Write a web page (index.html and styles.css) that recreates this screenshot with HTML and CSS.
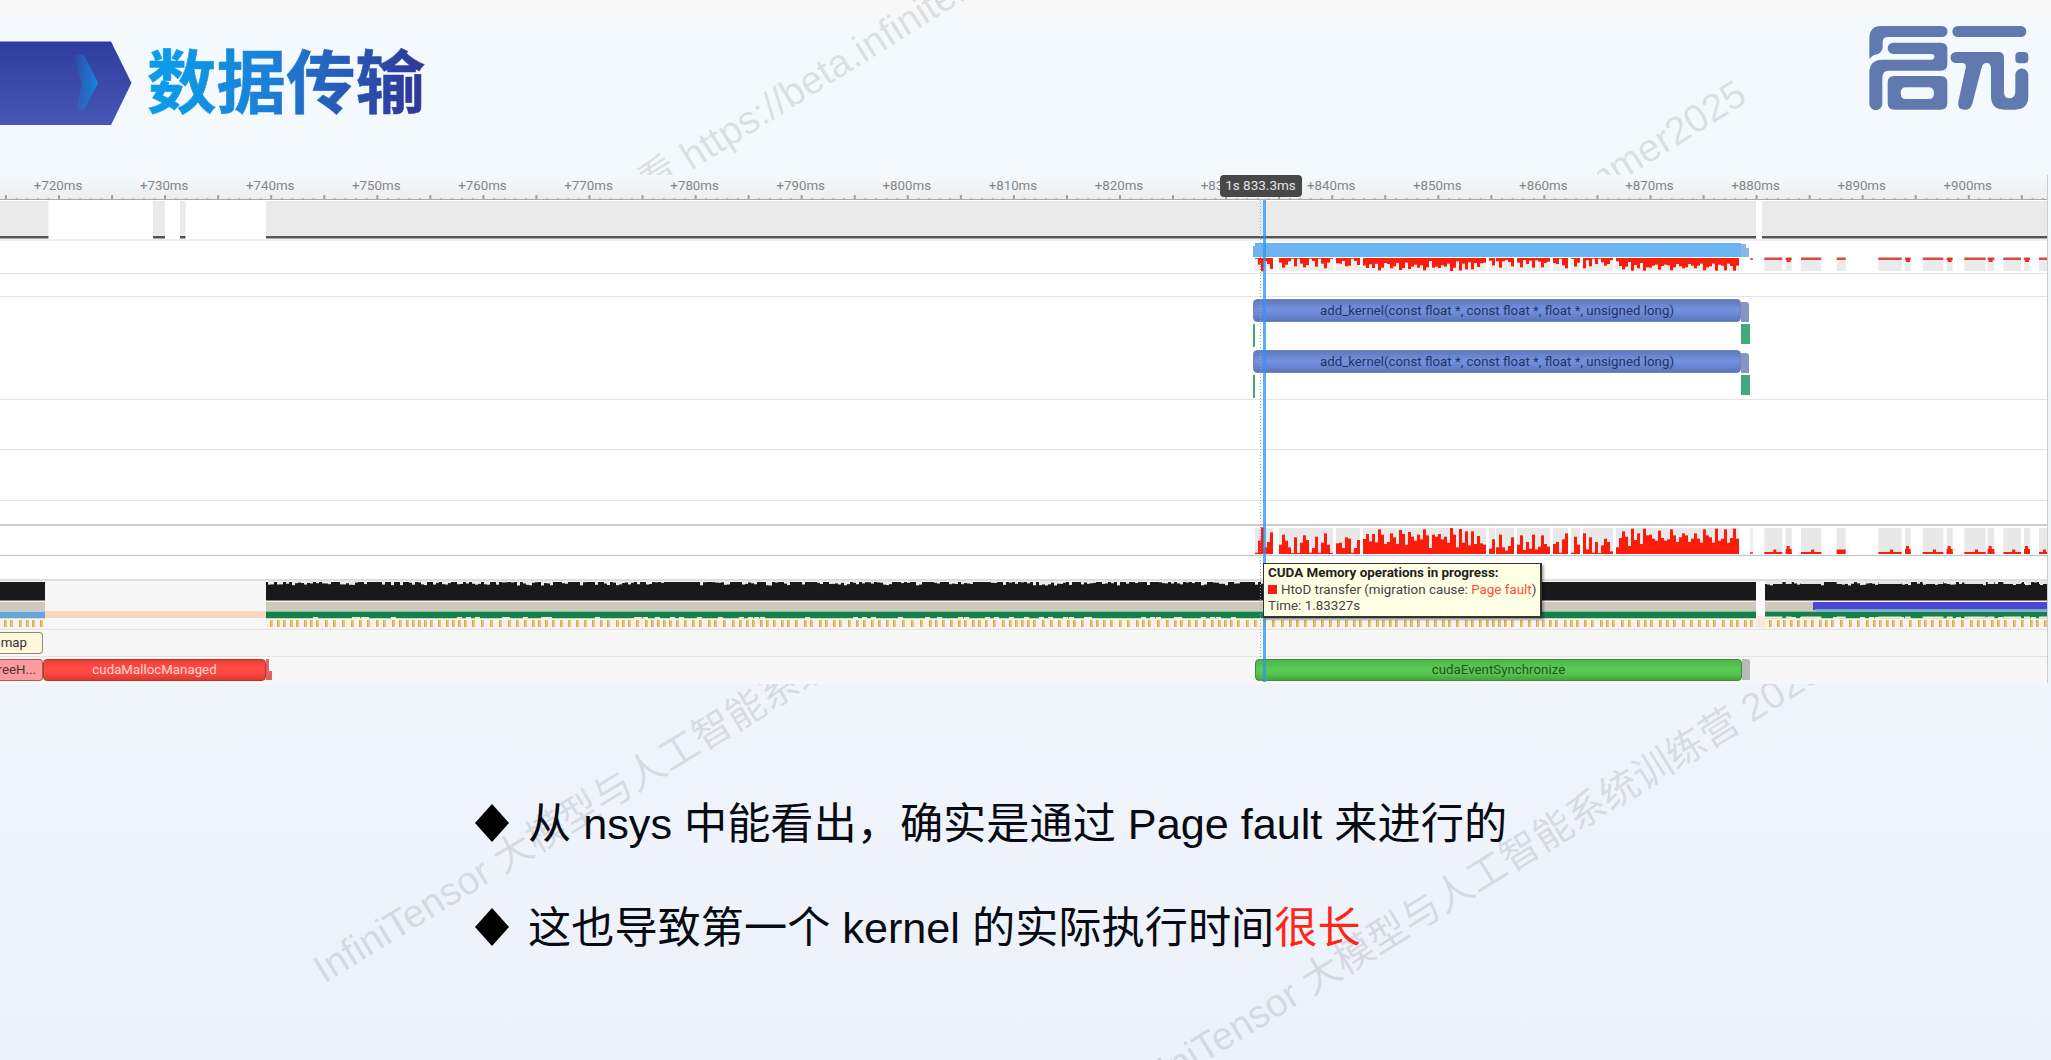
FILE: index.html
```html
<!DOCTYPE html>
<html lang="zh-CN">
<head>
<meta charset="utf-8">
<title>数据传输</title>
<link rel="stylesheet" href="styles.css">
</head>
<body>
<main class="slide">
  <svg class="watermarks" viewBox="0 0 2051 1060" aria-hidden="true">
    <text class="mark" transform="translate(691 171) rotate(-32)"><tspan x="-50">看</tspan><tspan x="0">https://beta.infinitensor.com</tspan></text>
    <text class="mark" text-anchor="end" transform="translate(1749 101) rotate(-32)">Summer2025</text>
    <text class="mark" transform="translate(324 984) rotate(-31.5)">InfiniTensor 大模型与人工智能系统训练营 2025</text>
    <text class="mark" transform="translate(1133 1107) rotate(-31.8)">InfiniTensor 大模型与人工智能系统训练营 2025</text>
  </svg>

  <header class="head">
    <svg class="arrow" width="134" height="86" viewBox="0 0 134 86">
      <defs>
        <linearGradient id="arrowFill" x1="0" y1="0" x2="0" y2="1"><stop offset="0" stop-color="#2f3c9e"/><stop offset="1" stop-color="#4757b4"/></linearGradient>
        <linearGradient id="chevFill" x1="0" y1="0" x2="1" y2="0"><stop offset="0" stop-color="#0b8fe0" stop-opacity="0"/><stop offset=".7" stop-color="#0f86d8" stop-opacity=".7"/><stop offset="1" stop-color="#0b8fe0"/></linearGradient>
      </defs>
      <path d="M0 .5H111L131.500 42L111 84H0Z" fill="url(#arrowFill)"/>
      <path d="M73 14H84L98 42L84 69H76L82 42Z" fill="url(#chevFill)"/>
    </svg>
    <h1 class="title">数据传输</h1>
    <svg class="logo" width="161" height="86" viewBox="209 74 483 258">
      <g fill="#6079ae">
        <path d="M245 77H428a16 16 0 0 1 0 33H264q-14 1-14 16v15q0 13-14 20q-18 3-26 15V115Q210 77 245 77Z"/>
        <path fill-rule="evenodd" d="M282 127H424q20 0 20 20v44q0 20-20 20H268q-19 0-19 22v77a19 19 0 0 1-39 0V218q0-40 40-40H396q9 0 9-8.500q0-8.500-9-8.500H282a17 17 0 0 1 0-34Z"/>
        <path fill-rule="evenodd" d="M285 227H424q20 0 20 20v61q0 20-20 20H285q-20 0-20-20v-61q0-20 20-20ZM320 261q-16 0-16 17.500t16 17.500h68q16 0 16-17.500T388 261Z"/>
        <rect x="459" y="77" width="222" height="33" rx="16.500"/>
        <path d="M470 155H597q17 0 17 17V276q0 18 16 18t18-18V224a19 19 0 0 1 39 0v64q0 40-40 40h-32q-40 0-40-40V205q0-17-13-17t-16 17L519 310q-5 18-22 18q-24 0-20-24L499 203q3-15-11-15H470a16.500 16.500 0 0 1 0-33Z"/>
        <rect x="648" y="155" width="39" height="34" rx="12"/>
      </g>
    </svg>
  </header>

  <section class="timeline">
    <div class="ruler">
      <div class="labels" id="labels"></div>
      <svg class="ticks" id="ticks" width="2047" height="8"></svg>
    </div>
    <div class="row cpu"><svg id="cpu" width="2047" height="41"></svg></div>
    <div class="row overview"><svg id="overview" width="2047" height="33"></svg></div>
    <div class="row spacer-a"></div>
    <div class="row kernels">
      <div class="kernel-line"><span class="bar kernel">add_kernel(const float *, const float *, float *, unsigned long)</span><i class="stub blue"></i></div>
      <div class="mem-line"><i class="mem thin"></i><i class="mem"></i></div>
      <div class="kernel-line"><span class="bar kernel">add_kernel(const float *, const float *, float *, unsigned long)</span><i class="stub blue"></i></div>
      <div class="mem-line"><i class="mem thin"></i><i class="mem"></i></div>
    </div>
    <div class="row spacer-b"></div>
    <div class="row spacer-c"></div>
    <div class="row spacer-d"></div>
    <div class="row memory"><svg id="memory" width="2047" height="30"></svg></div>
    <div class="row spacer-e"></div>
    <div class="row thread"><svg id="thread" width="2047" height="49"></svg></div>
    <div class="row calls os"><span class="bar mmap">mmap</span></div>
    <div class="row calls api">
      <span class="bar free">reeH...</span><span class="bar malloc">cudaMallocManaged</span><i class="stub red"></i>
      <span class="bar sync">cudaEventSynchronize</span><i class="stub grey"></i>
    </div>
    <div class="guide"></div>
    <div class="cursor"></div>
    <div class="badge">1s 833.3ms</div>
    <div class="tooltip">
      <strong>CUDA Memory operations in progress:</strong>
      <span><i class="swatch"></i>HtoD transfer (migration cause: <em>Page fault</em>)</span>
      <span>Time: 1.83327s</span>
    </div>
  </section>

  <ul class="points">
    <li><svg class="diamond" width="36" height="40" viewBox="0 0 36 40"><path d="M18 1L35 20L18 39L1 20Z"/></svg><p>从 nsys 中能看出，确实是通过 Page fault 来进行的</p></li>
    <li><svg class="diamond" width="36" height="40" viewBox="0 0 36 40"><path d="M18 1L35 20L18 39L1 20Z"/></svg><p>这也导致第一个 kernel 的实际执行时间<em>很长</em></p></li>
  </ul>
</main>
<script src="timeline.js"></script>
</body>
</html>
```
FILE: styles.css
```css
* { box-sizing: border-box; }
body { margin: 0; }
.slide {
  position: relative;
  width: 2051px;
  height: 1060px;
  overflow: hidden;
  background: linear-gradient(#f8f8f8 0, #f7f8f9 12px, #f4f9fd 20px, #f4f9fe 175px, #f0f4fb 690px, #edf1fa 1060px);
  font-family: Roboto, "Liberation Sans", sans-serif;
}
.watermarks { position: absolute; inset: 0; width: 2051px; height: 1060px; }
.mark { font: 39px "Liberation Sans", "Noto Sans CJK SC", sans-serif; fill: #6b7078; fill-opacity: .19; }

.head { position: relative; display: flex; height: 175px; align-items: flex-start; }
.arrow { margin-top: 41px; }
.title {
  margin: 28px 0 0 13px;
  font: 700 69.500px/100px "Noto Sans CJK SC", sans-serif;
  -webkit-text-stroke: .6px transparent;
  background: linear-gradient(100deg, #0b9be8 10%, #1c7fd6 45%, #2f3a9b 92%);
  -webkit-background-clip: text;
  background-clip: text;
  color: transparent;
}
.logo { margin: 25px 21px 0 auto; }

.timeline {
  position: relative;
  width: 2048px;
  height: 508px;
  background: #fff;
  border-right: 1px solid #ccc;
}
.ruler { height: 25px; background: linear-gradient(#f5f9fd, #ededed); border-bottom: 1px solid #aaa; display: flex; flex-direction: column; overflow: hidden; }
.labels { display: flex; margin-left: 5px; height: 17px; flex: none; }
.labels span { flex: 0 0 106.100px; text-align: center; font-size: 13.300px; line-height: 22px; color: #858585; }
.ticks { display: block; flex: none; }

.row { border-bottom: 1px solid #e4e4e4; }
.row svg { display: block; }
.cpu { height: 41px; border: 0; }
.overview { height: 33px; }
.spacer-a { height: 23px; }
.kernels { height: 103px; padding-top: 2px; }
.kernel-line { display: grid; grid-template-columns: 488px 8px; padding-left: 1253px; height: 23px; }
.mem-line { display: flex; justify-content: space-between; padding: 2px 297px 0 1253px; height: 28px; }
.mem { width: 9px; height: 20px; background: #43aa7b; }
.mem.thin { width: 2px; height: 23px; background: #4aa578; }
.bar { display: block; border-radius: 4px; text-align: center; font-size: 13.300px; line-height: 21px; white-space: nowrap; overflow: hidden; }
.kernel { height: 22.500px; color: #25325f; background: linear-gradient(#6078bd, #7292e0 45%, #6a87d5 70%, #5d74b8); border: 1px solid #7184bd; }
.stub { display: block; border-radius: 0 3px 0 0; }
.stub.blue { height: 20px; margin-top: 3px; background: #8795c5; }
.spacer-b { height: 50px; }
.spacer-c { height: 51px; }
.spacer-d { height: 25px; border-bottom: 2px solid #ccc; }
.memory { height: 30px; border-bottom: 1px solid #bfc3c8; }
.spacer-e { height: 25px; border-bottom: 2px solid #ddd; }
.thread { height: 49px; background: #f8f7f7; }
.calls { display: flex; background: #f7f7f7; }
.os { height: 27px; padding-top: 2px; }
.api { height: 27px; padding-top: 2px; border: 0; }
.mmap { width: 43px; height: 22px; border: 1px solid #908b78; border-left: 0; border-radius: 0 4px 4px 0; background: #fff7dc; color: #333; line-height: 20px; padding-right: 15px; display: flex; justify-content: flex-end; }
.free { width: 43px; height: 22px; border: 1px solid #aa5c5e; border-left: 0; border-radius: 0 4px 4px 0; background: #fd9c9e; color: #513538; padding-right: 6px; display: flex; justify-content: flex-end; line-height: 20px; }
.malloc { width: 223px; height: 22px; background: linear-gradient(#e83e36, #ff4a41 35%, #ff4a41 65%, #d93a34); border: 1px solid #b9332f; color: #ffd5d0; line-height: 20px; }
.stub.red { width: 6px; height: 21px; background: linear-gradient(90deg, #e2625e 3px, transparent 3px) 0 0 / 100% 12px no-repeat, linear-gradient(#e2625e, #e2625e) 0 12px no-repeat; }
.sync { width: 487px; height: 22px; margin-left: 983px; background: linear-gradient(#4cb646, #59cc54 45%, #55c44f 70%, #43a53d); border: 1px solid #418c3d; color: #245222; line-height: 20px; }
.stub.grey { width: 8px; height: 21px; background: #b8bab9; }

.guide { position: absolute; left: 1260px; top: 25px; width: 1px; height: 483px; background: repeating-linear-gradient(#aaa 0 1px, transparent 1px 3px); }
.cursor { position: absolute; left: 1263px; top: 25px; width: 3px; height: 482px; background: rgba(47, 151, 246, .78); }
.badge { position: absolute; left: 1219.500px; top: 0; width: 82px; height: 22px; border-radius: 4px; background: #484848; color: #e4e4e4; font-size: 13.500px; line-height: 21px; text-align: center; }
.tooltip {
  position: absolute; left: 1263px; top: 388px; width: 279px; height: 55px;
  display: flex; flex-direction: column; padding: 1px 0 0 4px;
  background: #ffffe3; border: 1px solid #333; border-width: 1px 2px 2px 1px; box-shadow: 2px 2px 2px rgba(0, 0, 0, .3);
  font-size: 13.400px; line-height: 16.500px; color: #444; white-space: nowrap;
}
.tooltip strong { color: #222; font-weight: 700; }
.tooltip em { font-style: normal; color: #ff4b3c; }
.swatch { display: inline-block; width: 9px; height: 9px; margin-right: 4px; background: #fb1d10; }

.points { position: relative; list-style: none; margin: 89px 0 0 474px; padding: 0; font: 43.200px/104px "Liberation Sans", "Noto Sans CJK SC", sans-serif; color: #080b12; }
.points li { display: flex; align-items: center; height: 104px; gap: 18px; }
.points p { margin: 0; white-space: nowrap; }
.points em { font-style: normal; color: #ff2413; }
.diamond { margin-bottom: 2px; }
```
FILE: timeline.js
```js
const NS = 'http://www.w3.org/2000/svg';
function rect(parent, x, y, w, h, fill) {
  const r = document.createElementNS(NS, 'rect');
  Object.entries({ x, y, width: w, height: h, fill }).forEach(([k, v]) => r.setAttribute(k, v));
  parent.appendChild(r);
}
const el = id => document.getElementById(id);
let seed = 7;
function rnd() { seed = (seed * 16807) % 2147483647; return seed / 2147483647; }

// Ruler: one label each 10 ms
const STEP = 106.1, FIRST = 59;
for (let k = 0; k < 19; k++) {
  const s = document.createElement('span');
  s.textContent = '+' + (720 + k * 10) + 'ms';
  el('labels').appendChild(s);
}
for (let k = -5; k < 188; k++) {
  const x = FIRST + k * STEP / 10;
  if (k % 5 === 0) rect(el('ticks'), x - 1, 3, 2, 5, '#a0a0a0');
  else rect(el('ticks'), x - 1, 6, 2, 1, '#bbb');
}

// CPU utilisation
[[0, 48.500], [153, 165], [180, 185.500], [266, 1756], [1762, 2047]].forEach(([a, b]) => {
  rect(el('cpu'), a, 1, b - a, 35.500, '#eaeaea');
  rect(el('cpu'), a, 36, b - a, 2.500, '#555');
});
rect(el('cpu'), 0, 39.500, 2047, 1, '#e2e2e2');

// Transfer load, three pixels to a sample
const left = [4,40,80,20,36,65,0,0,28,58,40,20,3,50,3,34,56,42,4,18,52,4,34,62,28,3,0,32,34,18,50,46,4,18,42,0,45,60,38,60,35,74,58,30,36,62,50,30,72,60,28,66,52,40,58,44,74,56,18,58,52,60,44,52,34,78,58,20,75,34,68,26,68,30,54,32,28,0,16,44];
const right = [20,58,20,10,24,50,0,28,56,12,36,16,58,14,22,56,30,22,0,30,36,4,44,62,0,4,52,28,0,62,14,50,4,36,3,26,46,36,8,0,20,48,68,52,24,76,42,62,30,76,56,58,46,40,70,48,40,44,74,56,36,50,62,56,36,46,62,46,34,74,56,50,34,76,40,46,74,34,48,76,46];
const over = el('overview'), mem = el('memory');
rect(over, 1253, 5, 3, 11, '#6bb3f1');
rect(over, 1255, 2, 486, 14, '#6bb3f1');
rect(over, 1741, 3, 5, 13, '#86b8e6');
rect(over, 1746, 7, 3, 9, '#86b8e6');
[[left, 1255], [right, 1496]].forEach(([data, start]) => data.forEach((h, i) => {
  const x = start + i * 3;
  if (!h) return;
  rect(over, x, 17, 3, 13, '#eee');
  rect(mem, x, 2, 3, 26, '#e8e8e8');
  if (h > 4) rect(over, x, 17, 3, Math.max(2, h / 78 * 13), '#fb1d0b');
  else rect(over, x, 17, 3, 1, '#c65b50');
  rect(mem, x, 28 - h / 3, 3, h / 3, '#fb1d0b');
}));
const segments = [[433,487],[497,515],[543,604],[650,677],[775,845],[855,872],[908,970],[980,998],[1033,1097],[1103,1123],[1150,1203],[1212,1230],[1257,1281]];
segments.forEach(([a, b], i) => {
  const x = 1620 + a / 3, w = (b - a) / 3, narrow = w < 8;
  rect(over, x, 17, w, 13, '#ebebeb');
  rect(over, x, 16.500, w, 2.500, '#d84a42');
  rect(mem, x, 2, w, 26, '#e8e8e8');
  rect(mem, x, i === 3 ? 23.500 : 26, w, i === 3 ? 4.500 : 2, '#fb1d0b');
  if (narrow) {
    rect(over, x + 1, 17, 4, 4, '#ea2f25');
    rect(mem, x, 23, w, 5, '#fb1d0b');
    rect(mem, x + 1, 20, 3, 8, '#fb1d0b');
  } else if (i !== 3) rect(mem, x + w * .5, 23.500, 3, 4, '#fb1d0b');
});
rect(mem, 1750, 2, 3, 26, '#f0eded');
rect(mem, 1750, 26, 3, 2, '#e65a50');
rect(over, 1750, 17, 3, 2, '#b77');

// Thread states
const th = el('thread');
rect(th, 45, 30, 221, 7, '#f9d6bf');
[[0, 45], [266, 1756], [1765, 2047]].forEach(([a, b], n) => {
  rect(th, a, 1, b - a, 18.500, '#191919');
  rect(th, a, 20, b - a, 1, '#f3efea');
  rect(th, a, 21, b - a, 9, '#cfc9bb');
  rect(th, a, 30.500, b - a, 7, n ? '#13814b' : '#65a5d9');
  rect(th, a, 37.500, b - a, 10, '#fbf3e9');
  if (n) for (let x = a + 2; x < b - 3; x += 3) {
    if ((x < 1263 || x > 1765) && rnd() < .6) rect(th, x, 0, 3, 1 + rnd() * 3.500, '#eeeceb');
    if ((x < 1263 || x > 1765) && rnd() < .18) rect(th, x, 36, 5, 2, '#f4ead9');
  }
  for (let x = a + 4; x < b - 2; x += 6 + Math.floor(rnd() * 4)) {
    rect(th, x, 39, 1.500, 7, '#e8a62c');
    rect(th, x + 1.500, 39, 1.200, 7, '#c9b77a');
  }
});
segments.forEach(([a, b]) => {
  rect(th, 1620 + a / 3, 0, (b - a) / 3, 3, '#e8e6e5');
  rect(th, 1620 + a / 3, 35.500, (b - a) / 3, 2, '#f4ead9');
});
rect(th, 1756, 0, 9, 37, '#fbfbfb');
rect(th, 1756, 35, 9, 12, '#f7ead9');
rect(th, 1813, 21, 3, 8, '#4a48d2');
rect(th, 1815, 21, 232, 7, '#4a48d2');
rect(th, 1815, 28, 232, 2, '#7fa6d8');
```
